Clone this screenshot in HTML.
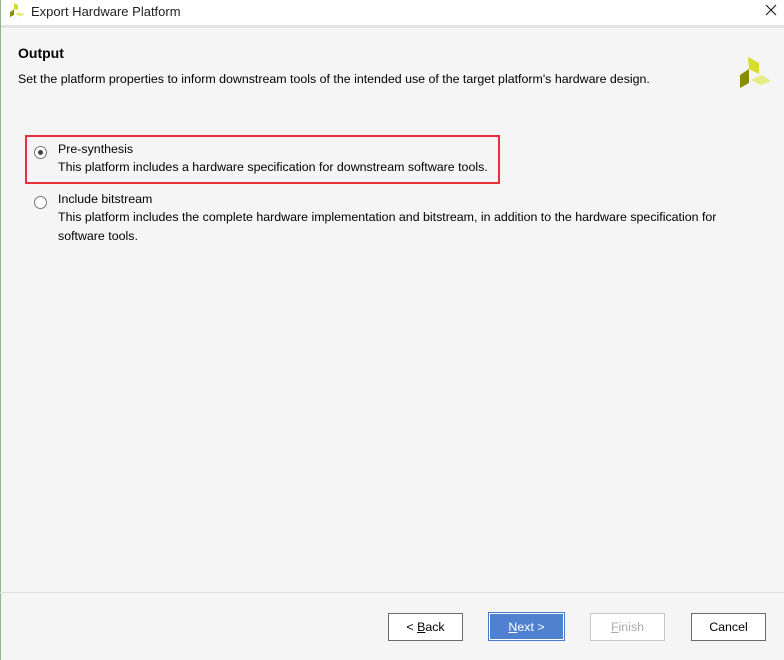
<html><head><style>
body{margin:0;width:784px;height:660px;background:#f5f5f5;font-family:"Liberation Sans",sans-serif;font-size:12.4px;color:#000;position:relative;overflow:hidden}
.a{position:absolute}
.btn{position:absolute;top:613px;width:75px;height:28px;border:1px solid #6b6b6b;background:#fff;text-align:center;line-height:27px;font-size:12.4px;box-sizing:border-box}
.r{position:absolute;width:13px;height:13px;border:1px solid #777;border-radius:50%;background:#fff;box-sizing:border-box}
</style></head><body>
<div class="a" style="left:0;top:0;width:784px;height:25px;background:#fff"></div>
<div class="a" style="left:0;top:25px;width:784px;height:3px;background:#e3e3e3"></div>
<div class="a" style="left:0;top:0;width:1px;height:660px;background:#8fb58f"></div>
<svg class="a" style="left:0;top:0" width="30" height="25" viewBox="0 0 30 25"><polygon points="10,12 14,9.5 14,15 10,17" fill="#8a8d00"/><polygon points="14,3 18,5 18,10 14,9.5" fill="#d6dc30"/><polygon points="15,14 19,12 25,14.5 20,16.5" fill="#e6ec80"/></svg>
<div class="a" style="left:31px;top:4px;font-size:13px;color:#222">Export Hardware Platform</div>
<svg class="a" style="left:765px;top:4px" width="12" height="12"><path d="M1 1L11 11M11 1L1 11" stroke="#222" stroke-width="1.2"/></svg>
<div class="a" style="left:18px;top:45px;font-size:14px;font-weight:bold">Output</div>
<div class="a" style="left:18px;top:72px">Set the platform properties to inform downstream tools of the intended use of the target platform's hardware design.</div>
<svg class="a" style="left:0;top:0" width="784" height="100"><polygon points="740,75 749,69 749,83 740,88" fill="#8a8d00"/><polygon points="748,57 759,63 759,74 749,69" fill="#d6dc30"/><polygon points="751,80 761,75 771,81 761,85" fill="#e6ec80"/></svg>
<div class="a" style="left:25px;top:135px;width:471px;height:45px;border:2px solid #e8303a"></div>
<div class="r" style="left:34px;top:146px"><div class="a" style="left:3px;top:3px;width:5px;height:5px;border-radius:50%;background:#444"></div></div>
<div class="a" style="left:58px;top:142px">Pre-synthesis</div>
<div class="a" style="left:58px;top:160px">This platform includes a hardware specification for downstream software tools.</div>
<div class="r" style="left:34px;top:196px"></div>
<div class="a" style="left:58px;top:192px">Include bitstream</div>
<div class="a" style="left:58px;top:208px;line-height:19px;width:680px">This platform includes the complete hardware implementation and bitstream, in addition to the hardware specification for software tools.</div>
<div class="a" style="left:0;top:592px;width:784px;height:1px;background:#e0e0e0"></div>
<div class="btn" style="left:388px">&lt; <u>B</u>ack</div>
<div class="btn" style="left:488px;width:77px;height:29px;top:612px;background:#5080d0;color:#fff;border:1px solid #4a78cc;box-shadow:inset 0 0 0 1px #fff,inset 0 0 0 2px #5080d0;line-height:29px"><u>N</u>ext &gt;</div>
<div class="btn" style="left:590px;color:#aaa;border-color:#c8c8c8"><u>F</u>inish</div>
<div class="btn" style="left:691px">Cancel</div>
</body></html>
